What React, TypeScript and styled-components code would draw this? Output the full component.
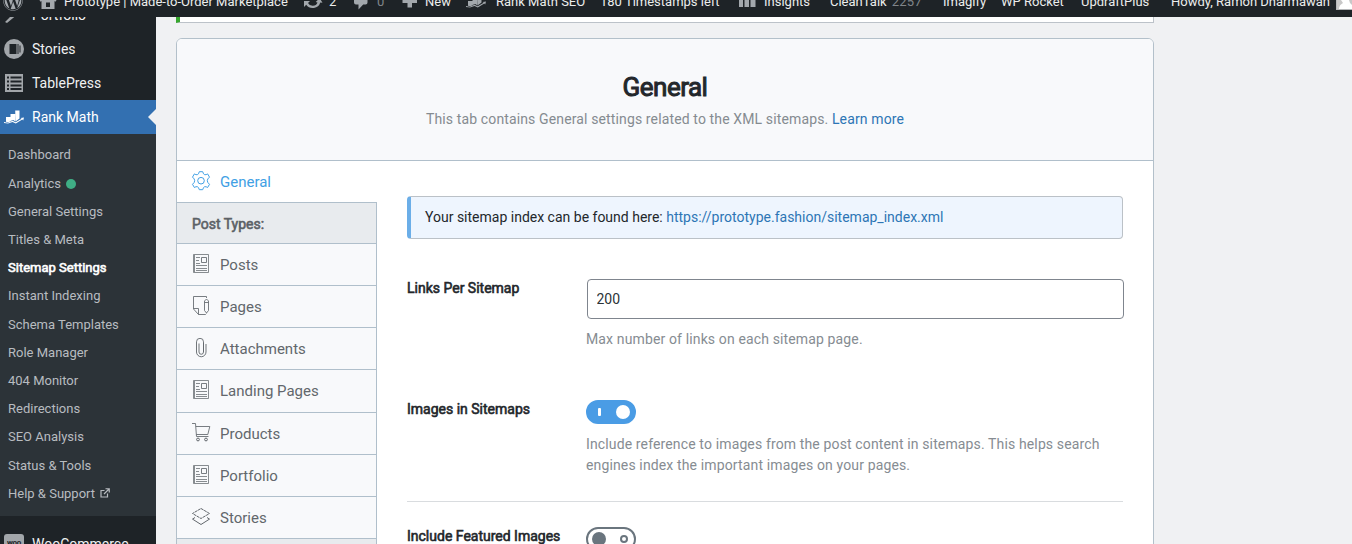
import React from 'react';
import styled, { createGlobalStyle, css } from 'styled-components';
import { FaWordpress } from 'react-icons/fa';

const GlobalStyle = createGlobalStyle`
  * { box-sizing: border-box; }
  html, body { margin: 0; padding: 0; }
  body {
    font-family: Roboto, "Liberation Sans", sans-serif;
    font-size: 13px;
    color: #2c2f33;
    background: #f0f1f3;
    overflow: hidden;
  }
  svg { display: block; flex: none; }
`;

const softBold = css`
  font-weight: 400;
  -webkit-text-stroke: 0.6px currentColor;
`;

const Page = styled.div`
  height: 544px;
  display: flex;
  flex-direction: column;
  overflow: hidden;
`;

const TopBar = styled.header`
  height: 17px;
  flex: none;
  display: flex;
  align-items: flex-end;
  background: #1e2327;
  color: #eceded;
  overflow: hidden;
`;

const TopItem = styled.div<{ $w: number; $dim?: boolean }>`
  width: ${(p) => p.$w}px;
  flex: none;
  height: 32px;
  padding-top: 2px;
  display: flex;
  align-items: center;
  line-height: 30px;
  white-space: nowrap;
  color: ${(p) => (p.$dim ? '#80858a' : '#eceded')};
`;

const TopIcon = styled.span<{ $w: number }>`
  width: ${(p) => p.$w}px;
  flex: none;
  margin-top: -2px;
  color: #a3a8ad;
`;

const Count = styled.span`
  color: #80858a;
  margin-left: 5px;
  letter-spacing: 0.3px;
`;

const WpWrap = styled.span`
  display: flex;
  padding-left: 3px;
`;

const Body = styled.div`
  flex: 1;
  min-height: 0;
  display: flex;
`;

const SideNav = styled.nav`
  width: 156px;
  flex: none;
  background: #1e2327;
  overflow: hidden;
`;

const MenuList = styled.div`
  margin-top: -19px;
`;

const MenuItem = styled.a<{ $active?: boolean }>`
  position: relative;
  height: 34px;
  display: flex;
  align-items: center;
  padding-left: 4px;
  font-size: 14px;
  color: ${(p) => (p.$active ? '#fff' : '#f0f1f2')};
  background: ${(p) => (p.$active ? '#3370b1' : 'transparent')};
  ${(p) =>
    p.$active &&
    css`
      &::after {
        content: '';
        position: absolute;
        right: 0;
        top: 9px;
        border: 8px solid transparent;
        border-left-width: 0;
        border-right-color: #f0f1f3;
      }
    `}
`;

const MenuIcon = styled.span<{ $active?: boolean }>`
  width: 28px;
  color: ${(p) => (p.$active ? '#fff' : '#a2a6aa')};
`;

const WooBadge = styled.span`
  display: block;
  width: 20px;
  height: 20px;
  border-radius: 3px;
  background: #a2a6aa;
  color: #1e2327;
  font-size: 8px;
  font-weight: 700;
  line-height: 17px;
  text-align: center;
  letter-spacing: -0.3px;
`;

const SubMenu = styled.div`
  height: 382px;
  padding: 6.9px 0 0 8px;
  background: #2c3338;
`;

const SubItem = styled.a<{ $current?: boolean }>`
  height: 28.2px;
  display: flex;
  align-items: center;
  gap: 5px;
  color: ${(p) => (p.$current ? '#fff' : '#b8bcc0')};
  ${(p) => p.$current && softBold}
`;

const Dot = styled.i`
  width: 10px;
  height: 10px;
  margin-top: 2px;
  border-radius: 50%;
  background: #3fae85;
`;

const Gap = styled.div`
  height: 11px;
`;

const Main = styled.main`
  width: 978px;
  margin-left: 20px;
`;

const Notice = styled.div`
  height: 6px;
  margin-bottom: 15px;
  background: #fff;
  border: 1px solid #bcc2c9;
  border-top: 0;
  border-left: 4px solid #36a62e;
`;

const Card = styled.section`
  height: 560px;
  border: 1px solid #b3c0ca;
  border-radius: 6px;
  background: #fff;
  overflow: hidden;
`;

const CardHeader = styled.div`
  height: 122px;
  padding-top: 30px;
  text-align: center;
  background: #f8f9fb;
  border-bottom: 1px solid #b0bfcb;
`;

const Title = styled.h1`
  margin: 0;
  font-size: 26px;
  line-height: 36px;
  letter-spacing: -0.5px;
  color: #23272b;
  font-weight: 400;
  -webkit-text-stroke: 1px currentColor;
`;

const Sub = styled.p`
  margin: 4px 0 0;
  font-size: 14px;
  line-height: 20px;
  letter-spacing: 0.13px;
  color: #858b90;
`;

const Link = styled.a`
  color: #2d75b5;
`;

const CardBody = styled.div`
  display: flex;
`;

const Tabs = styled.div`
  width: 200px;
  flex: none;
`;

const Tab = styled.a<{ $active?: boolean }>`
  height: ${(p) => (p.$active ? '42px' : '42.15px')};
  display: flex;
  align-items: center;
  gap: 9px;
  padding: 0.8px 0 0 14px;
  font-size: 15px;
  color: ${(p) => (p.$active ? '#41a0e4' : '#62676c')};
  background: ${(p) => (p.$active ? '#fff' : '#f8f9fb')};
  border-bottom: 1px solid #b0bfcb;
  border-right: ${(p) => (p.$active ? '0' : '1px solid #b0bfcb')};

  svg {
    margin-top: -2px;
  }
`;

const TabHeading = styled.div`
  height: 41px;
  padding: 1px 0 0 15px;
  font-size: 14px;
  line-height: 41px;
  color: #5c6166;
  background: #e8ebee;
  border-bottom: 1px solid #b0bfcb;
  border-right: 1px solid #b0bfcb;
  ${softBold}
`;

const Panel = styled.div`
  flex: 1;
  min-width: 0;
  padding: 35px 30px 0;
`;

const InfoBox = styled.div`
  height: 43px;
  padding-left: 14px;
  font-size: 14px;
  line-height: 41px;
  color: #23272b;
  background: #eef5fe;
  border: 1px solid #bbc1c7;
  border-left: 4px solid #6baee8;
  border-radius: 4px;
`;

const Fields = styled.div`
  padding-top: 40px;
`;

const Field = styled.div<{ $h: number; $line?: boolean }>`
  height: ${(p) => p.$h}px;
  display: flex;
  border-bottom: ${(p) => (p.$line ? '1px solid #d9dcdf' : '0')};
`;

const LastField = styled.div`
  display: flex;
  padding-top: 25px;
`;

const Label = styled.label`
  width: 179px;
  flex: none;
  font-size: 14px;
  line-height: 18px;
  color: #23272b;
  ${softBold}
`;

const Control = styled.div`
  flex: 1;
  min-width: 0;
`;

const Input = styled.input`
  display: block;
  width: 537px;
  height: 40px;
  margin-left: 1px;
  padding: 0 9px 0 8.5px;
  font: 14px Roboto, "Liberation Sans", sans-serif;
  color: #2c3338;
  background: #fff;
  border: 1px solid #7f858e;
  border-radius: 4px;
`;

const Help = styled.p`
  margin: 10px 0 0;
  font-size: 14px;
  line-height: 21px;
  letter-spacing: 0.135px;
  white-space: nowrap;
  color: #868c92;
`;

const Toggle = styled.div<{ $on?: boolean }>`
  width: 50px;
  height: 24px;
  display: flex;
  flex-direction: ${(p) => (p.$on ? 'row' : 'row-reverse')};
  align-items: center;
  justify-content: space-between;
  border-radius: 12px;
  border: 2px solid ${(p) => (p.$on ? '#4a9ce5' : '#6a757e')};
  background: ${(p) => (p.$on ? '#4a9ce5' : '#fff')};
  padding: ${(p) => (p.$on ? '0 4px 0 10px' : '0 6px 0 4px')};
`;

const Knob = styled.i<{ $on?: boolean }>`
  width: 14px;
  height: 14px;
  border-radius: 50%;
  background: ${(p) => (p.$on ? '#fff' : '#6a757e')};
`;

const OnMark = styled.i`
  width: 3px;
  height: 8px;
  border-radius: 1px;
  background: #fff;
`;

const OffMark = styled.i`
  width: 8px;
  height: 8px;
  border-radius: 50%;
  border: 2px solid #6a757e;
`;

const Line = ({ size = 20, w = 1, children }: { size?: number; w?: number; children: React.ReactNode }) => (
  <svg width={size} height={size} viewBox="0 0 20 20" fill="none" stroke="currentColor" strokeWidth={w}>
    {children}
  </svg>
);

const Solid = ({ size = 20, children }: { size?: number; children: React.ReactNode }) => (
  <svg width={size} height={size} viewBox="0 0 20 20" fill="currentColor">
    {children}
  </svg>
);

const RankIcon = () => (
  <Solid>
    <path d="M2 10h4.500v4.400L4 15.200l-2-.4zM6.500 7h4.700v7.200l-2-1.100-2.700 1zM11.200 3.500h4.300v8l-4 3z" />
    <path d="M0 14.900l3.800.8 4.800-2 3 1.500 6-3.500-1-.8 3.400-.4-.8 2.900-.9-.8-6.500 3.900-3.300-1.500L4 16.600l-4-.7z" />
  </Solid>
);

const PostIcon = () => (
  <Line>
    <path d="M2.500.5h15v18h-15zM3.500 1v17" strokeOpacity=".75" />
    <path d="M5 3.500h4M5 6.500h3M5 9.500h4M5 11.500h11M5 14.500h11M5 16.500h11" strokeOpacity=".75" />
    <path d="M10.500 3.500h5v5h-5z" strokeOpacity=".85" />
  </Line>
);

const GearIcon = () => (
  <Line>
    <circle cx="10" cy="9.700" r="3.300" />
    <path d="M8.300.7h3.400q.6 2.700 2 3t2.900-.8l1.900 3.200q-2.200 1.800-2.200 3.600t2.200 3.600l-1.900 3.200q-1.500-1.100-2.900-.8t-2 3H8.300q-.6-2.700-2-3t-2.900.8L1.500 13.300q2.200-1.800 2.200-3.600T1.500 6.100l1.900-3.200q1.500 1.100 2.900.8t2-3z" />
  </Line>
);

const PageIcon = () => (
  <Line>
    <path d="M15.500 2V.5h-13v12.500l5 5.500h7l1-1M2.500 12.500h5v6" strokeOpacity=".85" />
    <path d="M13.500 5l2-2 2 2v9.500l-2 2.500-2-2.500zM13.500 6.500h4" strokeOpacity=".85" />
  </Line>
);

const ClipIcon = () => (
  <Line>
    <path d="M5.500 6v8a4.700 4.700 0 0 0 9.500 0V6M12.500 14V3.800a3.300 3.300 0 0 0-7 0V6M12.500 5v9a2.200 2.200 0 0 1-4.500 0V5.500" strokeOpacity=".9" />
  </Line>
);

const CartIcon = () => (
  <Line>
    <path d="M1 .5h3.500l1 13h12M4.800 3.500h14l-2 8H5.300" strokeOpacity=".85" />
    <circle cx="7" cy="16.500" r="1.400" />
    <circle cx="15" cy="16.500" r="1.400" />
  </Line>
);

const LayersIcon = () => (
  <Line>
    <path d="M10 1.500l8.500 5L10 11.500l-8.500-5z" strokeDasharray="3 .6" />
    <path d="M4 10.500l-2.500 1.600L10 17.500l8.500-5.400L16 10.500" />
  </Line>
);

const tabs: [string, React.ReactNode][] = [
  ['Posts', <PostIcon />],
  ['Pages', <PageIcon />],
  ['Attachments', <ClipIcon />],
  ['Landing Pages', <PostIcon />],
  ['Products', <CartIcon />],
  ['Portfolio', <PostIcon />],
  ['Stories', <LayersIcon />],
];

const subItems = [
  'Dashboard', 'Analytics', 'General Settings', 'Titles & Meta', 'Sitemap Settings', 'Instant Indexing',
  'Schema Templates', 'Role Manager', '404 Monitor', 'Redirections', 'SEO Analysis', 'Status & Tools', 'Help & Support',
];

export default function App() {
  return (
    <Page>
      <GlobalStyle />
      <TopBar>
        <TopItem $w={38}><WpWrap><TopIcon $w={20}><FaWordpress size={20} /></TopIcon></WpWrap></TopItem>
        <TopItem $w={265}>
          <TopIcon $w={26}>
            <Solid><path fillRule="evenodd" d="M10 1l8.500 8.500-1.200 1.200-.8-.7v8h-13v-8l-.8.700-1.200-1.200zM8 11.500V16h4v-4.500z" /></Solid>
          </TopIcon>
          Prototype | Made-to-Order Marketplace
        </TopItem>
        <TopItem $w={49}>
          <TopIcon $w={26}>
            <Solid>
              <path d="M10 3a7 7 0 0 1 6.500 4.500l-2.300.8A4.700 4.700 0 0 0 6 7.200L7.500 9H2V3.500l2.200 2A7.500 7.500 0 0 1 10 3zM1 10h6l-2 2a5.200 5.200 0 0 0 9.500-.5l-1.800-.6 4-3.700 2.800 4.600-2.200-.3A8 8 0 0 1 3.200 13.800L1 16z" />
            </Solid>
          </TopIcon>
          2
        </TopItem>
        <TopItem $w={48} $dim>
          <TopIcon $w={25}>
            <Solid><path d="M4 2h9.500a2 2 0 0 1 2 2v7.500a2 2 0 0 1-2 2h-2.300L6.500 18.500v-5H4a2 2 0 0 1-2-2V4a2 2 0 0 1 2-2z" /></Solid>
          </TopIcon>
          0
        </TopItem>
        <TopItem $w={66}>
          <TopIcon $w={25}>
            <Solid><path d="M7.500 2.500h4.500V7.500h5v4.500h-5v4.500H7.500V12h-5V7.500h5z" /></Solid>
          </TopIcon>
          New
        </TopItem>
        <TopItem $w={134}>
          <TopIcon $w={30}><RankIcon /></TopIcon>
          Rank Math SEO
        </TopItem>
        <TopItem $w={137}>180 Timestamps left</TopItem>
        <TopItem $w={93}>
          <TopIcon $w={27}>
            <Solid><path d="M2 9h4v7H2zM7.500 5H12v11H7.500zM13.500 2h5v14h-5z" /></Solid>
          </TopIcon>
          Insights
        </TopItem>
        <TopItem $w={113}>CleanTalk <Count>2257</Count></TopItem>
        <TopItem $w={58}>Imagify</TopItem>
        <TopItem $w={80}>WP Rocket</TopItem>
        <TopItem $w={90}>UpdraftPlus</TopItem>
        <TopItem $w={165}>Howdy, Ramon Dharmawan</TopItem>
        <TopItem $w={16}>
          <svg width="16" height="16" viewBox="0 0 16 16">
            <path d="M0 0h16v16H0z" fill="#b5b7b9" />
            <path d="M1 0h15v15H1z" fill="#c8c8c8" />
            <path d="M5 0h8v6l1 3 2 2v4H3q0-4 4-6L5 6z" fill="#fff" />
          </svg>
        </TopItem>
      </TopBar>
      <Body>
        <SideNav>
          <MenuList>
            <MenuItem>
              <MenuIcon><Solid><path d="M8 5l8-2 1 8-2.500-2.500L3 18l-2-1L11 7z" /></Solid></MenuIcon>
              Portfolio
            </MenuItem>
            <MenuItem>
              <MenuIcon>
                <Solid>
                  <circle cx="10" cy="10" r="10" />
                  <path d="M5.500 5h7v10h-7z" fill="#1e2327" />
                  <path d="M14 5v10M16 6.500v7" stroke="#1e2327" />
                </Solid>
              </MenuIcon>
              Stories
            </MenuItem>
            <MenuItem>
              <MenuIcon>
                <Solid>
                  <path d="M1 1h18v18H1z" />
                  <path d="M3 4.500h2M6.500 4.500h11M3 8.500h2M6.500 8.500h11M3 12.500h2M6.500 12.500h11M3 16h2M6.500 16h11" stroke="#1e2327" strokeWidth="1.900" />
                </Solid>
              </MenuIcon>
              TablePress
            </MenuItem>
            <MenuItem $active>
              <MenuIcon $active><RankIcon /></MenuIcon>
              Rank Math
            </MenuItem>
            <SubMenu>
              {subItems.map((t) => (
                <SubItem key={t} $current={t === 'Sitemap Settings'}>
                  {t}
                  {t === 'Analytics' && <Dot />}
                  {t === 'Help & Support' && (
                    <Line size={10} w={2.4}>
                      <path d="M9 5H2v13h13v-7M11 1.500h7.500V9M18 2L8 12" />
                    </Line>
                  )}
                </SubItem>
              ))}
            </SubMenu>
            <Gap />
            <MenuItem>
              <MenuIcon><WooBadge>woo</WooBadge></MenuIcon>
              WooCommerce
            </MenuItem>
          </MenuList>
        </SideNav>
        <Main>
          <Notice />
          <Card>
            <CardHeader>
              <Title>General</Title>
              <Sub>This tab contains General settings related to the XML sitemaps. <Link>Learn more</Link></Sub>
            </CardHeader>
            <CardBody>
              <Tabs>
                <Tab $active><GearIcon />General</Tab>
                <TabHeading>Post Types:</TabHeading>
                {tabs.map(([name, icon]) => (
                  <Tab key={name}>{icon}{name}</Tab>
                ))}
                <TabHeading />
              </Tabs>
              <Panel>
                <InfoBox>
                  Your sitemap index can be found here: <Link>https://prototype.fashion/sitemap_index.xml</Link>
                </InfoBox>
                <Fields>
                  <Field $h={121}>
                    <Label>Links Per Sitemap</Label>
                    <Control>
                      <Input defaultValue="200" />
                      <Help>Max number of links on each sitemap page.</Help>
                    </Control>
                  </Field>
                  <Field $h={102} $line>
                    <Label>Images in Sitemaps</Label>
                    <Control>
                      <Toggle $on><OnMark /><Knob $on /></Toggle>
                      <Help>
                        Include reference to images from the post content in sitemaps. This helps search
                        <br />
                        engines index the important images on your pages.
                      </Help>
                    </Control>
                  </Field>
                  <LastField>
                    <Label>Include Featured Images</Label>
                    <Control><Toggle><OffMark /><Knob /></Toggle></Control>
                  </LastField>
                </Fields>
              </Panel>
            </CardBody>
          </Card>
        </Main>
      </Body>
    </Page>
  );
}
